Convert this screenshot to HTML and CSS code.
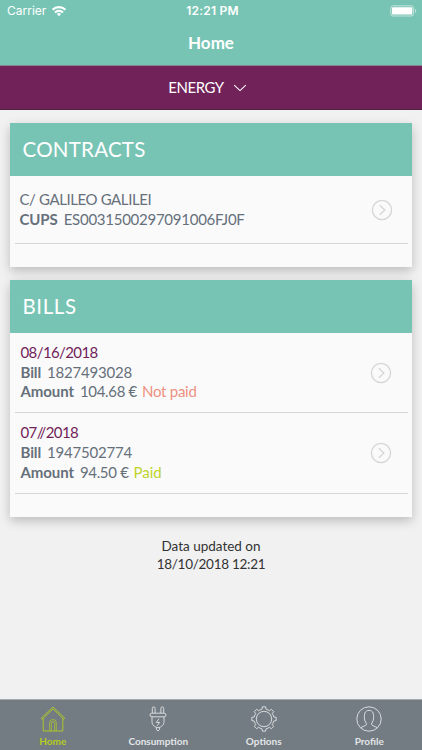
FILE: index.html
```
<!DOCTYPE html>
<html lang="en">
<head>
  <meta charset="UTF-8">
  <meta name="viewport" content="width=device-width, initial-scale=1.0">
  <title>Home</title>
  <link rel="stylesheet" href="styles.css">
</head>
<body>
  <header class="header">
    <div class="status-bar">
      <div class="carrier">
        <span>Carrier</span>
        <svg width="16" height="12" viewBox="0 0 16 12" fill="none" stroke="#fff" stroke-width="2.1">
          <path d="M1.6 4.8a9 9 0 0 1 12.8 0M4 7.5a5.7 5.7 0 0 1 8 0"/>
          <path d="M8 11.2L5.900 9.100a3 3 0 0 1 4.200 0z" fill="#fff" stroke="none"/>
        </svg>
      </div>
      <span class="time">12:21 PM</span>
      <svg class="battery" width="28" height="12" viewBox="0 0 28 12">
        <rect x=".8" y=".8" width="22.8" height="10.2" rx="2.4" fill="none" stroke="#fff" stroke-opacity=".55"/>
        <rect x="2" y="2.2" width="20.3" height="7.4" rx="1" fill="#fff"/>
        <path d="M25 4v4a2.200 2.200 0 0 0 0-4z" fill="#fff" fill-opacity=".55"/>
      </svg>
    </div>
    <h1>Home</h1>
  </header>

  <div class="selector">
    <span>ENERGY</span>
    <svg width="14" height="8" viewBox="0 0 14 8" fill="none" stroke="#fff" stroke-width="1.1">
      <path d="M1.2 1.2l5.8 5.4 5.8-5.4"/>
    </svg>
  </div>

  <main>
    <section class="card contracts">
      <h2>CONTRACTS</h2>
      <div class="row">
        <div class="info">
          <p class="address">C/ GALILEO GALILEI</p>
          <p><b>CUPS</b><span class="code">ES0031500297091006FJ0F</span></p>
        </div>
        <svg class="arrow" width="22" height="22" viewBox="0 0 22 22">
          <circle cx="11" cy="11" r="9.6"/>
          <path d="M8.8 6.2l5 4.800-5 4.800"/>
        </svg>
      </div>
    </section>

    <section class="card bills">
      <h2>BILLS</h2>
      <div class="row">
        <div class="info">
          <p class="date">08/16/2018</p>
          <p><b>Bill</b><span class="number">1827493028</span></p>
          <p><b>Amount</b><span class="price">104.68 €</span><span class="not-paid">Not paid</span></p>
        </div>
        <svg class="arrow" width="22" height="22" viewBox="0 0 22 22">
          <circle cx="11" cy="11" r="9.6"/>
          <path d="M8.8 6.2l5 4.800-5 4.800"/>
        </svg>
      </div>
      <div class="row">
        <div class="info">
          <p class="date">07//2018</p>
          <p><b>Bill</b><span class="number">1947502774</span></p>
          <p><b>Amount</b><span class="price">94.50 €</span><span class="paid">Paid</span></p>
        </div>
        <svg class="arrow" width="22" height="22" viewBox="0 0 22 22">
          <circle cx="11" cy="11" r="9.6"/>
          <path d="M8.8 6.2l5 4.800-5 4.800"/>
        </svg>
      </div>
    </section>

    <p class="updated">Data updated on<br><span class="stamp">18/10/2018 12:21</span></p>
  </main>

  <nav class="tabs">
    <a class="tab active">
      <svg width="26" height="26" viewBox="0 0 26 26">
        <path d="M1.200 12.300L13 1l11.800 11.300-1 1L13 3 2.200 13.300zM3.200 12.400V25h19.600V12.400"/>
        <path d="M9.700 25v-8.200a3.300 3.300 0 0 1 6.600 0V25M11.300 25v-7.800a1.700 1.700 0 0 1 3.400 0V25" stroke-width=".7"/>
      </svg>
      <span>Home</span>
    </a>
    <a class="tab">
      <svg width="26" height="26" viewBox="0 0 26 26">
        <path d="M7.300 7.200V2.300a1.400 1.400 0 0 1 2.800 0v4.900M15.900 7.200V2.300a1.400 1.400 0 0 1 2.800 0v4.900"/>
        <rect x="5" y="7.2" width="16" height="3.6" rx="1.8"/>
        <path d="M7 10.800v4.700c0 3.200 2.200 5.600 6 6.200 3.800-.6 6-3 6-6.200v-4.700M11.400 21.500v1.800l1.600 1.800 1.600-1.800v-1.800"/>
        <path d="M14 12.700l-2.700 3.700h3.400L12 19.800"/>
      </svg>
      <span>Consumption</span>
    </a>
    <a class="tab">
      <svg width="26" height="26" viewBox="0 0 26 26">
        <circle cx="13" cy="13" r="7.7"/>
        <path d="M11 3.200L11.400.8h3.200L15 3.200A10 10 0 0 1 18.500 4.700L20.400 3.300l2.300 2.300L21.300 7.500A10 10 0 0 1 22.800 11l2.400.4v3.200l-2.400.4A10 10 0 0 1 21.300 18.500l1.400 1.900-2.300 2.300-1.900-1.400A10 10 0 0 1 15 22.800l-.4 2.400h-3.200L11 22.800A10 10 0 0 1 7.500 21.300l-1.900 1.400-2.300-2.300 1.400-1.900A10 10 0 0 1 3.200 15L.8 14.600v-3.200L3.200 11A10 10 0 0 1 4.700 7.500L3.300 5.600l2.300-2.300 1.900 1.400A10 10 0 0 1 11 3.200z"/>
      </svg>
      <span>Options</span>
    </a>
    <a class="tab">
      <svg width="26" height="26" viewBox="0 0 26 26">
        <circle cx="13" cy="13" r="12.2"/>
        <path d="M4.800 21.800c1.300-1.500 5.700-1.800 5.700-3.600 0-1.600-1.800-2.300-2-5.300C8.100 8.100 8.700 4.400 13 4.400s4.900 3.700 4.500 8.500c-.2 3-2 3.700-2 5.300 0 1.800 4.400 2.100 5.700 3.600"/>
      </svg>
      <span>Profile</span>
    </a>
  </nav>
</body>
</html>
```
FILE: styles.css
```
* {
  box-sizing: border-box;
}

body {
  font-family: Lato, "Open Sans", sans-serif;
  background-color: #f1f1f1;
  color: #66707a;
  margin: 0;
  height: 750px;
  display: flex;
  flex-direction: column;
  overflow: hidden;
}

h1, h2, p {
  margin: 0;
}

.header {
  background-color: #78c4b4;
  color: #fff;
  height: 66px;
  border-bottom: 1px solid #86838e;
}

.status-bar {
  font-family: Inter, sans-serif;
  font-size: 12px;
  line-height: 22px;
  height: 22px;
  padding: 0 4px 0 7px;
  display: grid;
  grid-template-columns: 1fr auto 1fr;
  align-items: center;
}

.carrier {
  display: flex;
  align-items: center;
  gap: 5px;
}

.time {
  font-weight: 600;
  letter-spacing: 0.2px;
}

.battery {
  justify-self: end;
}

h1 {
  font-size: 17px;
  line-height: 42px;
  text-align: center;
}

.selector {
  background-color: #712258;
  border-bottom: 1px solid #4d233f;
  color: #fff;
  height: 44px;
  font-size: 15px;
  letter-spacing: -0.45px;
  display: flex;
  align-items: center;
  justify-content: center;
  gap: 9px;
  padding: 0 7px 1px 0;
}

.selector svg {
  margin-top: 2px;
}

main {
  flex: 1;
  padding: 13px 10px 0;
}

.card {
  background-color: #fafafa;
  box-shadow: 0 4px 10px rgba(0, 0, 0, 0.22);
  padding-bottom: 23px;
  margin-bottom: 13px;
}

.card h2 {
  background-color: #78c4b4;
  color: #fff;
  font-size: 20.500px;
  font-weight: 400;
  line-height: 53px;
  height: 53px;
  padding-left: 12.500px;
  letter-spacing: 0.25px;
}

.card.bills h2 {
  letter-spacing: 0.6px;
}

.row {
  display: flex;
  justify-content: space-between;
  align-items: center;
  height: 80px;
  margin: 0 4.500px;
  padding: 0 16px 0 6px;
  border-bottom: 1px solid #d6d7d8;
}

.row + .row {
  height: 81px;
}

.contracts .row {
  height: 68px;
  padding: 0 15px 0 5px;
}

.info {
  font-size: 15px;
  line-height: 19.800px;
  white-space: nowrap;
}

.info b {
  margin-right: 6px;
  letter-spacing: -0.1px;
}

.address {
  letter-spacing: -0.4px;
}

.code {
  letter-spacing: -0.26px;
}

.number {
  letter-spacing: -0.2px;
}

.price {
  margin-right: 5px;
  letter-spacing: -0.32px;
}

.date {
  color: #712258;
  letter-spacing: -0.6px;
}

.not-paid {
  color: #ed9180;
  letter-spacing: -0.25px;
}

.paid {
  color: #bfd42c;
}

.arrow {
  fill: none;
  stroke: #d6d6d6;
  stroke-width: 1.3;
}

.updated {
  color: #333;
  font-size: 13.500px;
  line-height: 18px;
  text-align: center;
  margin-top: 20px;
}

.stamp {
  letter-spacing: -0.27px;
}

.tabs {
  display: grid;
  grid-template-columns: repeat(4, 1fr);
  height: 51px;
  background-color: #737c83;
  border-top: 1px solid #a5aaae;
  color: #e3e5e7;
}

.tab {
  display: flex;
  flex-direction: column;
  align-items: center;
  padding-top: 6px;
  font-size: 10px;
  line-height: 12px;
  font-weight: 700;
}

.tab svg {
  fill: none;
  stroke: currentColor;
  stroke-width: 0.9;
  margin-bottom: 3px;
}

.active {
  color: #b4cd22;
}
```
